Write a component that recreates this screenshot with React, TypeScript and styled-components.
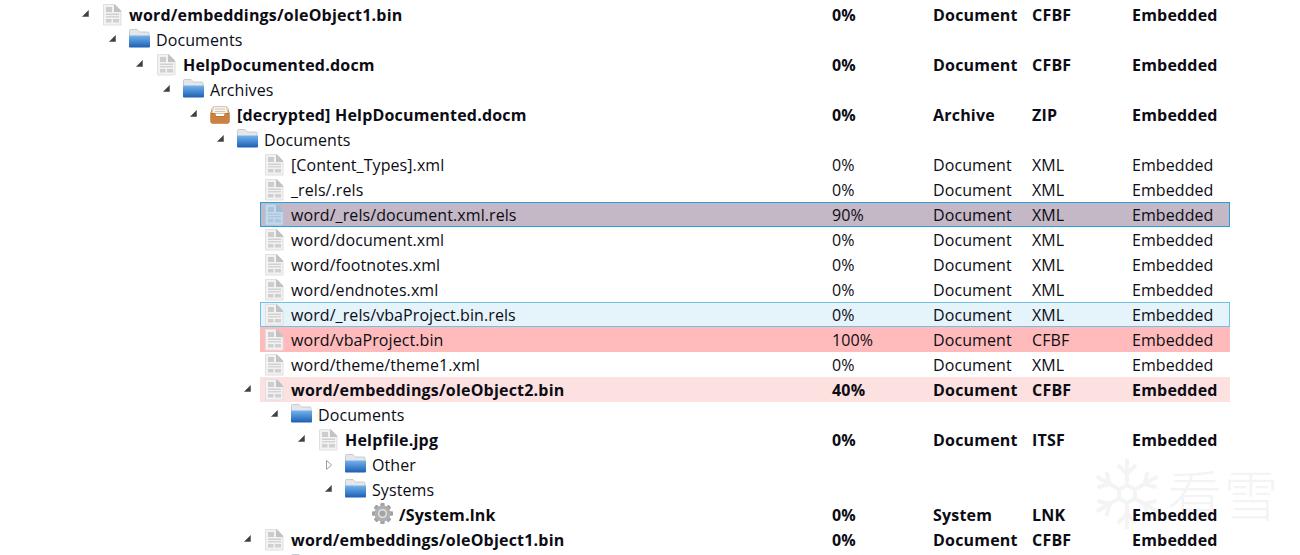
import React from 'react'
import styled, { createGlobalStyle } from 'styled-components'

const GlobalStyle = createGlobalStyle`
  html, body {
    margin: 0;
    padding: 0;
    background: #fff;
    overflow: hidden;
  }
  body {
    font-family: "Open Sans", "Noto Sans", "Liberation Sans", sans-serif;
    color: #0c0c14;
  }
`

const Tree = styled.div`
  position: relative;
  width: 1300px;
  height: 555px;
  padding-top: 2px;
  box-sizing: border-box;
  overflow: hidden;
`

type Tone = 'plain' | 'selected' | 'hover' | 'danger' | 'warning'

const toneStyles: Record<Tone, string> = {
  plain: 'background: transparent; border-color: transparent;',
  selected: 'background: #c4b7c6; border-color: #26a0da;',
  hover: 'background: #e5f3fb; border-color: #70c0e7;',
  danger: 'background: #ffbbbb; border-color: #ffbbbb;',
  warning: 'background: #fde1e1; border-color: #fde1e1;',
}

const RowBox = styled.div<{ $level: number; $tone: Tone; $bold: boolean }>`
  position: relative;
  box-sizing: border-box;
  display: flex;
  align-items: center;
  height: 25px;
  width: ${(p) => 1132 - 27 * p.$level}px;
  margin-left: ${(p) => 98 + 27 * p.$level}px;
  padding: 1px 0 0 30px;
  border: 1px solid transparent;
  ${(p) => toneStyles[p.$tone]}
  font-size: 16px;
  font-weight: ${(p) => (p.$bold ? 700 : 400)};
  letter-spacing: ${(p) => (p.$bold ? '0.2px' : '0.08px')};
  white-space: nowrap;
`

const Arrow = styled.svg`
  position: absolute;
  left: -18px;
  top: 6px;
  width: 12px;
  height: 12px;
`

const NodeIcon = styled.svg`
  position: absolute;
  left: 3px;
  top: 0;
  width: 22px;
  height: 23px;
  filter: blur(0.45px);
`

const Name = styled.span`
  flex: 1;
  min-width: 0;
`

const Cell = styled.span<{ $width: number }>`
  width: ${(p) => p.$width}px;
  flex: none;
`

const Watermark = styled.div`
  position: absolute;
  left: 1091px;
  top: 458px;
  display: flex;
  align-items: center;
  gap: 4px;
  pointer-events: none;
`

const WatermarkText = styled.span`
  font-family: "Noto Sans CJK SC", "Noto Sans", sans-serif;
  font-weight: 300;
  font-size: 55px;
  line-height: 66px;
  letter-spacing: 1.5px;
  margin-bottom: 5px;
  color: #f4f4f4;
`

const ExpandArrow = ({ open }: { open: boolean }) => (
  <Arrow viewBox="0 0 12 12">
    {open ? (
      <path d="M7.5 1.5v6h-6z" fill="#404040" stroke="#555" strokeWidth="0.6" />
    ) : (
      <path d="M2.5 1.5l5 4.5-5 4.5z" fill="#fff" stroke="#a0a0a0" strokeWidth="1" />
    )}
  </Arrow>
)

const DocIcon = ({ tint }: { tint?: boolean }) => (
  <NodeIcon viewBox="0 0 22 23">
    <path
      d="M1.5 1.5h11l6.5 6.500v14h-17.500z"
      fill={tint ? '#c3d8ea' : '#f2f2f2'}
      stroke={tint ? '#b2cbe0' : '#e0e0e0'}
    />
    <path d="M12 1.500h1l6 6v1.500h-7z" fill={tint ? '#9dbdd6' : '#c2c2c2'} />
    <rect x="4" y="4" width="6" height="5" fill={tint ? '#a8c5dc' : '#cdcdcd'} />
    <rect x="4" y="10.500" width="13" height="1.500" fill={tint ? '#adc8de' : '#d0d0d0'} />
    <rect x="4" y="13" width="13" height="1.500" fill={tint ? '#adc8de' : '#d4d4d4'} />
    <rect x="4" y="16" width="5.500" height="3.500" fill={tint ? '#adc8de' : '#d0d0d0'} />
    <rect x="11" y="16" width="6" height="3.500" fill={tint ? '#adc8de' : '#d0d0d0'} />
  </NodeIcon>
)

const FolderIcon = () => (
  <NodeIcon viewBox="0 0 22 23">
    <defs>
      <linearGradient id="folderFront" x1="0" y1="0" x2="0" y2="1">
        <stop offset="0" stopColor="#74b3ec" />
        <stop offset="1" stopColor="#1b5fb4" />
      </linearGradient>
    </defs>
    <path d="M0.500 2.500a1 1 0 0 1 1-1h6.500l2.500 2.500h8.500a1 1 0 0 1 1 1v4h-19.500z" fill="#e4e6e9" stroke="#bcc2c9" strokeWidth="0.8" />
    <path d="M0 7.500h21v11a1 1 0 0 1-1 1H1a1 1 0 0 1-1-1z" fill="url(#folderFront)" />
  </NodeIcon>
)

const ArchiveIcon = () => (
  <NodeIcon viewBox="0 0 22 23">
    <path d="M3.500 3.500h13l1.500 7h-16z" fill="#f6f3ee" stroke="#d3b594" strokeWidth="0.8" />
    <path d="M5 6h10M5 8.500h10" stroke="#cfc8bd" />
    <path d="M2.500 3 0.500 10v8.500a2 2 0 0 0 2 2h15a2 2 0 0 0 2-2V10l-2-7 1 7H15l-1 3H6l-1-3H1.500z" fill="#b0662b" />
    <path d="M0.500 10.500H5l1 3h8l1-3h4.500v8a2 2 0 0 1-2 2h-15a2 2 0 0 1-2-2z" fill="#c98240" />
  </NodeIcon>
)

const teeth = [0, 45, 90, 135, 180, 225, 270, 315]

const GearIcon = () => (
  <NodeIcon viewBox="0 0 22 23">
    <g transform="translate(10.500 10.500)">
      {teeth.map((angle) => (
        <rect key={angle} x="-2.200" y="-10.500" width="4.400" height="5" rx="1" fill="#a2a2a2" transform={`rotate(${angle})`} />
      ))}
      <circle r="8" fill="#b0b0b0" />
      <circle r="5.200" fill="#dedede" stroke="#a2a2a2" strokeWidth="0.8" />
      <circle r="3" fill="#a4a4a4" />
    </g>
  </NodeIcon>
)

type Kind = 'doc' | 'folder' | 'archive' | 'gear'

interface Node {
  level: number
  kind: Kind
  name: string
  arrow?: 'open' | 'closed'
  tone?: Tone
  cells?: [string, string, string, string]
}

const doc = (percent: string, format: string): [string, string, string, string] => [
  percent,
  'Document',
  format,
  'Embedded',
]

const rows: Node[] = [
  { level: 0, kind: 'doc', name: 'word/embeddings/oleObject1.bin', arrow: 'open', cells: doc('0%', 'CFBF') },
  { level: 1, kind: 'folder', name: 'Documents', arrow: 'open' },
  { level: 2, kind: 'doc', name: 'HelpDocumented.docm', arrow: 'open', cells: doc('0%', 'CFBF') },
  { level: 3, kind: 'folder', name: 'Archives', arrow: 'open' },
  {
    level: 4,
    kind: 'archive',
    name: '[decrypted] HelpDocumented.docm',
    arrow: 'open',
    cells: ['0%', 'Archive', 'ZIP', 'Embedded'],
  },
  { level: 5, kind: 'folder', name: 'Documents', arrow: 'open' },
  { level: 6, kind: 'doc', name: '[Content_Types].xml', cells: doc('0%', 'XML') },
  { level: 6, kind: 'doc', name: '_rels/.rels', cells: doc('0%', 'XML') },
  { level: 6, kind: 'doc', name: 'word/_rels/document.xml.rels', tone: 'selected', cells: doc('90%', 'XML') },
  { level: 6, kind: 'doc', name: 'word/document.xml', cells: doc('0%', 'XML') },
  { level: 6, kind: 'doc', name: 'word/footnotes.xml', cells: doc('0%', 'XML') },
  { level: 6, kind: 'doc', name: 'word/endnotes.xml', cells: doc('0%', 'XML') },
  { level: 6, kind: 'doc', name: 'word/_rels/vbaProject.bin.rels', tone: 'hover', cells: doc('0%', 'XML') },
  { level: 6, kind: 'doc', name: 'word/vbaProject.bin', tone: 'danger', cells: doc('100%', 'CFBF') },
  { level: 6, kind: 'doc', name: 'word/theme/theme1.xml', cells: doc('0%', 'XML') },
  { level: 6, kind: 'doc', name: 'word/embeddings/oleObject2.bin', arrow: 'open', tone: 'warning', cells: doc('40%', 'CFBF') },
  { level: 7, kind: 'folder', name: 'Documents', arrow: 'open' },
  { level: 8, kind: 'doc', name: 'Helpfile.jpg', arrow: 'open', cells: doc('0%', 'ITSF') },
  { level: 9, kind: 'folder', name: 'Other', arrow: 'closed' },
  { level: 9, kind: 'folder', name: 'Systems', arrow: 'open' },
  { level: 10, kind: 'gear', name: '/System.lnk', cells: ['0%', 'System', 'LNK', 'Embedded'] },
  { level: 6, kind: 'doc', name: 'word/embeddings/oleObject1.bin', arrow: 'open', cells: doc('0%', 'CFBF') },
  { level: 7, kind: 'folder', name: '' },
]

const isBold = (node: Node) => node.kind !== 'folder' && (!!node.arrow || node.kind === 'gear')

const renderIcon = (node: Node) => {
  if (node.kind === 'folder') return <FolderIcon />
  if (node.kind === 'archive') return <ArchiveIcon />
  if (node.kind === 'gear') return <GearIcon />
  return <DocIcon tint={node.tone === 'selected'} />
}

const Row = ({ node }: { node: Node }) => (
  <RowBox $level={node.level} $tone={node.tone ?? 'plain'} $bold={isBold(node)}>
    {node.arrow && <ExpandArrow open={node.arrow === 'open'} />}
    {renderIcon(node)}
    <Name>{node.name}</Name>
    {node.cells && (
      <>
        <Cell $width={101}>{node.cells[0]}</Cell>
        <Cell $width={99}>{node.cells[1]}</Cell>
        <Cell $width={100}>{node.cells[2]}</Cell>
        <Cell $width={97}>{node.cells[3]}</Cell>
      </>
    )}
  </RowBox>
)

const Snowflake = () => (
  <svg width="72" height="72" viewBox="0 0 72 72" fill="none" stroke="#f4f4f4" strokeWidth="4">
    {[0, 60, 120].map((angle) => (
      <g key={angle} transform={`rotate(${angle} 36 36)`}>
        <path d="M36 1v24M36 47v24" />
        <path d="M27 7l9 9 9-9M27 65l9-9 9 9" />
      </g>
    ))}
    <path d="M36 27l8 4.500v9l-8 4.500-8-4.500v-9z" />
  </svg>
)

export default function App() {
  return (
    <>
      <GlobalStyle />
      <Tree>
        <Watermark>
          <Snowflake />
          <WatermarkText>看雪</WatermarkText>
        </Watermark>
        {rows.map((node, index) => (
          <Row key={index} node={node} />
        ))}
      </Tree>
    </>
  )
}
